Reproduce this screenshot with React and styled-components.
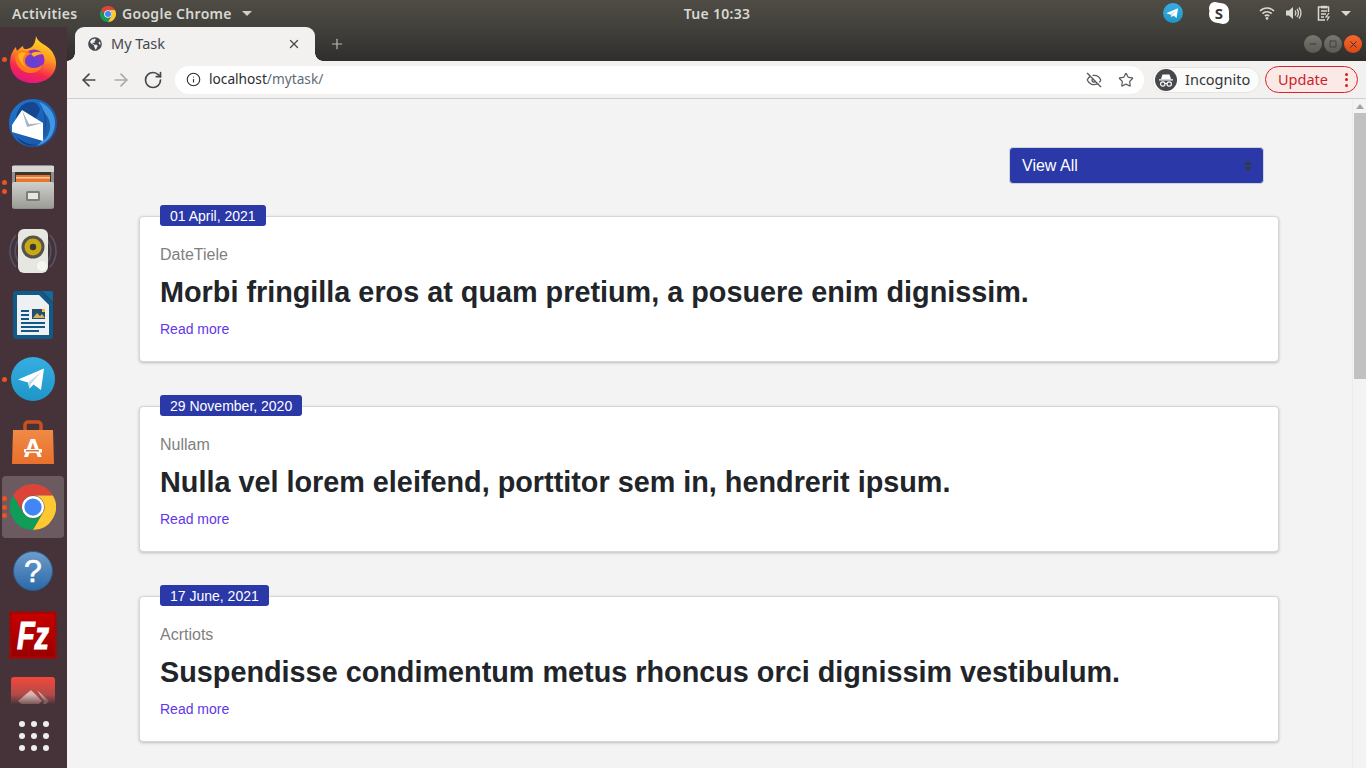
import React from "react";
import styled, { createGlobalStyle } from "styled-components";
import { ArrowLeft, ArrowRight, RotateCw, Info, EyeOff, Star, X, Plus, Minus, Square } from "lucide-react";
import { FaGlobeAmericas } from "react-icons/fa";

const Global = createGlobalStyle`
  html, body { margin: 0; padding: 0; height: 100%; overflow: hidden; background: #f3f3f3; }
  #root { height: 100%; }
  * { box-sizing: border-box; }
`;

const Desktop = styled.div`
  width: 1366px; height: 768px; display: flex; flex-direction: column; overflow: hidden;
  font-family: "Liberation Sans", Arial, sans-serif;
`;
const TopBar = styled.header`
  height: 27px; flex: none; display: grid; grid-template-columns: 1fr auto 1fr; align-items: center;
  background: linear-gradient(#4f4c45, #43413c); color: #d8d8d2;
  font-family: "Noto Sans", sans-serif; font-size: 14px; font-weight: 600; letter-spacing: .3px; line-height: 1;
`;
const TopLeft = styled.div`display: flex; align-items: center; padding-left: 12px;`;
const ActivitiesLabel = styled.span`width: 88px; white-space: nowrap;`;
const AppMenu = styled.div`display: flex; align-items: center; gap: 6px; white-space: nowrap;`;
const Caret = styled.i`
  display: block; width: 0; height: 0; margin-left: 4px;
  border-left: 5px solid transparent; border-right: 5px solid transparent; border-top: 5px solid ${p => p.$c || "#d0d0ca"};
`;
const Clock = styled.div`padding-left: 68px; white-space: nowrap;`;
const Tray = styled.div`display: flex; align-items: center; justify-content: flex-end; padding: 0 15px 1px 0; gap: 0;`;
const TraySlot = styled.span`display: flex; align-items: center; margin-left: ${p => p.$ml || 0}px;`;

const Body = styled.div`flex: 1; min-height: 0; display: flex;`;
const Dock = styled.nav`
  width: 67px; flex: none; display: flex; flex-direction: column; background: #46333a;
`;
const DockList = styled.div`
  flex: 1; min-height: 0; overflow: hidden; display: flex; flex-direction: column;
`;
const DockItem = styled.div`
  position: relative; flex: none; height: 64px; display: flex; align-items: center; justify-content: center;
  padding-right: 1px;
  &::before {
    content: ""; display: ${p => (p.$active ? "block" : "none")};
    position: absolute; left: 2px; right: 3px; top: 1px; bottom: 1px;
    background: rgba(255,255,255,.2); border-radius: 4px;
  }
  & > svg { position: relative; }
`;
const Pips = styled.div`
  position: absolute; left: 2px; top: 0; bottom: 0; display: flex; flex-direction: column;
  justify-content: center; gap: ${p => p.$gap}px; z-index: 1;
`;
const Pip = styled.i`display: block; width: 5px; height: 5px; border-radius: 50%; background: #e95420;`;
const DockFooter = styled.div`
  flex: none; height: 64px; display: grid; grid-template-columns: repeat(3, 6px); gap: 6px;
  place-content: center; background: #46333a;
`;
const GridDot = styled.i`display: block; width: 6px; height: 6px; border-radius: 50%; background: #eee;`;

const Browser = styled.div`flex: 1; min-width: 0; display: flex; flex-direction: column;`;
const TabStrip = styled.div`
  height: 34px; flex: none; display: flex; align-items: stretch; padding-left: 8px;
  background: linear-gradient(#43413c, #2f2e2c);
`;
const Tab = styled.div`
  position: relative; width: 240px; display: flex; align-items: center; padding: 0 14px 0 13px;
  background: #f2f1f0; border-radius: 9px 9px 0 0; color: #45484c;
  font-family: "Noto Sans", sans-serif; font-size: 14.5px;
  &::before, &::after { content: ""; position: absolute; bottom: 0; width: 8px; height: 8px; }
  &::before { left: -8px; background: radial-gradient(circle at 0 0, transparent 7.5px, #f2f1f0 8px); }
  &::after { right: -8px; background: radial-gradient(circle at 100% 0, transparent 7.5px, #f2f1f0 8px); }
`;
const TabTitle = styled.span`flex: 1; margin-left: 9px; padding-bottom: 2px; white-space: nowrap;`;
const NewTab = styled.div`display: flex; align-items: center; margin-left: 14px; color: #b8b7b4;`;
const WindowControls = styled.div`display: flex; align-items: center; gap: 2px; margin-left: auto; padding-right: 4px;`;
const WinBtn = styled.div`
  width: 18px; height: 18px; border-radius: 50%; display: flex; align-items: center; justify-content: center;
  background: ${p => (p.$close ? "linear-gradient(#f4682c,#dd4814)" : "linear-gradient(#79786f,#5b5a54)")};
  color: #2f2e2b;
`;
const Toolbar = styled.div`
  height: 38px; flex: none; display: flex; align-items: center; padding: 0 8px 0 12px;
  background: #f2f1f0; border-bottom: 1px solid #cfcfcf; color: #45484c;
`;
const NavButtons = styled.div`display: flex; align-items: center; gap: 12px; margin-right: 12px;`;
const Omnibox = styled.div`
  width: 969px; height: 28px; display: flex; align-items: center; padding: 0 10px 0 11px;
  background: #fff; border-radius: 14px; font-family: "Noto Sans", sans-serif; font-size: 13.7px; color: #2b2e33;
`;
const Url = styled.span`margin-left: 8px; flex: 1; padding-bottom: 2px; white-space: nowrap; span { color: #5f6b78; }`;
const OmniIcons = styled.div`display: flex; align-items: center; gap: 16px;`;
const IncognitoChip = styled.div`
  width: 108px; height: 26px; margin-left: 8px; display: flex; align-items: center; gap: 8px; padding-left: 2px;
  border: 1px solid #e6e5e3; border-radius: 13px; background: #fbfbfa;
  font-family: "Noto Sans", sans-serif; font-size: 14.5px; color: #33363a;
`;
const ChipText = styled.span`padding-bottom: 2px;`;
const UpdateChip = styled.div`
  width: 93px; height: 27px; margin-left: 5px; display: flex; align-items: center; justify-content: space-between;
  padding: 0 9px 0 12px; border: 1px solid #d8232a; border-radius: 14px; background: #fbe9e8;
  font-family: "Noto Sans", sans-serif; font-size: 14.5px; color: #cc1f1f;
`;
const KebabCol = styled.span`display: flex; flex-direction: column; gap: 2.5px;`;
const KebabDot = styled.i`display: block; width: 3px; height: 3px; border-radius: 50%; background: #cc1f1f;`;

const Viewport = styled.div`flex: 1; min-height: 0; display: flex; background: #f3f3f3;`;
const Page = styled.main`flex: 1; min-width: 0; overflow: hidden; padding: 48px 73px 0 72px;`;
const FilterRow = styled.div`display: flex; justify-content: flex-end; padding-right: 15px; margin-bottom: 32px;`;
const FilterSelect = styled.div`
  width: 255px; height: 37px; display: flex; align-items: center; justify-content: space-between;
  padding: 0 11px 0 12px; background: #2b38a8; border: 1px solid #ced4da; border-radius: 4px;
  color: #fff; font-size: 16px;
`;
const Stack = styled.div`display: flex; flex-direction: column; gap: 44px;`;
const Card = styled.article`
  position: relative; height: 146px; padding: 26px 19px 0 20px; background: #fff;
  border: 1px solid #d6d6d6; border-radius: 4px; box-shadow: 0 1px 3px rgba(0,0,0,.22);
`;
const DateBadge = styled.span`
  position: absolute; left: 20px; top: -12px; height: 21px; padding: 0 10px; display: flex; align-items: center;
  background: #2b38a8; border-radius: 3px; color: #fff; font-size: 14px; white-space: nowrap;
`;
const Category = styled.div`font-size: 16px; line-height: 24px; color: #7f7f7f;`;
const Title = styled.h3`
  margin: 8px 0 9px; font-size: 28.8px; line-height: 34.5px; font-weight: 700; color: #212529;
`;
const ReadMore = styled.a`display: block; font-size: 14px; line-height: 21px; color: #5f37e8;`;
const Scrollbar = styled.div`width: 14px; flex: none; display: flex; flex-direction: column; align-items: center; background: #f3f3f3; border-left: 1px solid #ececec;`;
const ScrollUp = styled.i`
  display: block; width: 0; height: 0; margin: 5px 0 4px;
  border-left: 4px solid transparent; border-right: 4px solid transparent; border-bottom: 5px solid #a3a3a3;
`;
const ScrollThumb = styled.div`width: 12px; height: 266px; background: #c1c1c1;`;

/* ---------- drawings ---------- */
const TelegramGlyph = ({ size, id }) => (
  <svg width={size} height={size} viewBox="0 0 44 44">
    <defs>
      <linearGradient id={id} x1="0" y1="0" x2="0" y2="1">
        <stop offset="0" stopColor="#37aee2" /><stop offset="1" stopColor="#1e96c8" />
      </linearGradient>
    </defs>
    <circle cx="22" cy="22" r="22" fill={`url(#${id})`} />
    <path d="M7 22.5 33 11.5 30 33 22.5 27.5 18.5 31.5 17 25.5Z" fill="#fff" />
    <path d="M17 25.5 30 15 20 27 18.5 31.5Z" fill="#c8daea" />
  </svg>
);
const Firefox = () => (
  <svg width="46" height="47" viewBox="0 0 46 47">
    <defs>
      <linearGradient id="ff1" x1=".7" y1="0" x2=".35" y2="1">
        <stop offset="0" stopColor="#ffe226" /><stop offset=".4" stopColor="#ff9a1f" /><stop offset=".75" stopColor="#f5274f" /><stop offset="1" stopColor="#e31587" />
      </linearGradient>
      <radialGradient id="ff2" cx=".45" cy=".6"><stop offset="0" stopColor="#5147d6" /><stop offset="1" stopColor="#9330c4" /></radialGradient>
    </defs>
    <path d="M26 0c1 4 4 6 7 8 5 3 9 6 11 11 2 4 2 7 2 9 0 11-10 19-23 19C10 47 0 39 0 26 0 22 1 18 3 15c1-2 2-3 3-4 0 2 1 3 1 4 2-2 4-4 6-5 0 2 1 3 2 3 5 0 10-2 11-13z" fill="url(#ff1)" />
    <circle cx="24" cy="24" r="10.500" fill="url(#ff2)" />
    <path d="M5 20c2-3 6-6 10-5 3 0 5 2 6 3-3 1-6 3-6 7 0 4 4 7 8 7 5 0 8-2 10-4-2 6-7 9-12 9-9 0-16-7-16-17z" fill="#ff7a1c" />
    <path d="M8 18c3-2 6-2 9-1-2 1-4 3-4 7 0 3 1 5 3 7-5-3-8-8-8-13z" fill="#ffb11f" />
    <path d="M21 18c3-3 9-3 13 0-3 0-8 1-10 3z" fill="#ffb11f" />
  </svg>
);
const Thunderbird = () => (
  <svg width="48" height="48" viewBox="0 0 48 48">
    <defs>
      <linearGradient id="tb1" x1="0" y1="0" x2="1" y2="1"><stop offset="0" stopColor="#1e78d2" /><stop offset="1" stopColor="#1a4fa0" /></linearGradient>
    </defs>
    <circle cx="24" cy="24" r="24" fill="url(#tb1)" />
    <path d="M30 3c9 3 16 11 16 21 0 9-5 17-13 21l-5 2c6-5 9-11 9-18 1-9-1-18-7-26z" fill="#3f97e4" />
    <path d="M34 12c5 5 8 11 7 18-1 5-3 9-7 12 2-5 3-10 2-15 0-5-1-10-2-15z" fill="#16468f" opacity=".7" />
    <path d="M7 19C8 9 15 2 24 3c4 1 6 4 7 8l-5 10-8-6-5 8-6 1z" fill="#16468f" />
    <circle cx="14" cy="14" r="1.600" fill="#0a1c3a" />
    <path d="M3 26 13 11 34 24V42L3 33z" fill="#fff" />
    <path d="M13 11 18 28 34 24 20 25z" fill="#aab4c2" />
    <path d="M8 38c5 5 12 8 20 8-8 2-16-1-20-8z" fill="#0f3a80" />
  </svg>
);
const Files = () => (
  <svg width="42" height="44" viewBox="0 0 42 44">
    <defs>
      <linearGradient id="fi1" x1="0" y1="0" x2="0" y2="1"><stop offset="0" stopColor="#cfcfcb" /><stop offset="1" stopColor="#9d9d98" /></linearGradient>
    </defs>
    <rect x="0" y="0" width="42" height="44" rx="2.500" fill="#8e8e8a" />
    <rect x="0" y="1" width="42" height="6" fill="#d6d6d2" />
    <rect x="3" y="7" width="36" height="12" fill="#3a3733" />
    <rect x="4" y="10" width="34" height="9" fill="#e8762f" />
    <rect x="4" y="12" width="34" height="1.500" fill="#f7c9a0" />
    <rect x="0" y="17" width="42" height="26" rx="2" fill="url(#fi1)" />
    <rect x="14" y="26" width="14" height="10" rx="1.500" fill="#7c7c78" />
    <rect x="16" y="28" width="10" height="6" fill="#e6e6e2" />
  </svg>
);
const Speaker = () => (
  <svg width="48" height="48" viewBox="0 0 48 48">
    <path d="M7 8c-8 9-8 23 0 32M41 8c8 9 8 23 0 32M10 12c-5 7-5 17 0 24M38 12c5 7 5 17 0 24" stroke="#5e6f8c" strokeWidth="1.600" fill="none" opacity=".55" />
    <rect x="9" y="2" width="30" height="44" rx="6" fill="#e6e7e1" />
    <circle cx="24" cy="20" r="11.500" fill="#55534b" />
    <circle cx="24" cy="20" r="8.500" fill="#c7a916" />
    <circle cx="24" cy="20" r="3.200" fill="#3a382f" />
    <circle cx="33" cy="39" r="5" fill="#f6f6f3" />
  </svg>
);
const Writer = () => (
  <svg width="40" height="48" viewBox="0 0 40 48">
    <path d="M2 0h26l12 12v33a3 3 0 0 1-3 3H3a3 3 0 0 1-3-3V2a2 2 0 0 1 2-2z" fill="#0f5a88" />
    <path d="M29 0h9a2 2 0 0 1 2 2v9z" fill="#0f6aa0" />
    <path d="M4 4h22l10 10v30H4z" fill="#eef0f1" />
    <path d="M8 19h8v2H8zM8 23h8v2H8zM8 27h8v2H8zM8 31h24v2H8zM8 35h24v2H8zM8 39h18v2H8z" fill="#0f5a88" />
    <rect x="19" y="18" width="13" height="10" fill="#24506e" />
    <path d="M20 27l4-5 3 3 2-2 3 4z" fill="#d9b25f" />
    <rect x="29" y="18" width="3" height="3" fill="#f4c430" />
  </svg>
);
const Software = () => (
  <svg width="42" height="46" viewBox="0 0 42 46">
    <defs>
      <linearGradient id="sw1" x1="0" y1="0" x2="0" y2="1"><stop offset="0" stopColor="#f08a45" /><stop offset="1" stopColor="#e8702c" /></linearGradient>
    </defs>
    <path d="M13 13V5a3 3 0 0 1 3-3h10a3 3 0 0 1 3 3v8" stroke="#c9511c" strokeWidth="3.500" fill="none" />
    <path d="M1 10h40l1 34H0z" fill="url(#sw1)" />
    <text x="21" y="37" textAnchor="middle" fontFamily="Liberation Sans" fontWeight="700" fontSize="26" fill="#fff">A</text>
    <rect x="12" y="29" width="18" height="3.500" fill="#fff" /><rect x="14" y="30" width="13" height="1.500" fill="#e8702c" />
  </svg>
);
const Chrome = ({ size = 46 }) => (
  <svg width={size} height={size} viewBox="0 0 48 48">
    <path d="M3.200 12A24 24 0 0 1 44.800 12H24A12 12 0 0 0 13.600 30Z" fill="#db4437" />
    <path d="M3.200 12 13.600 30A12 12 0 0 0 34.400 30L24 48A24 24 0 0 1 3.200 12Z" fill="#0f9d58" />
    <path d="M44.800 12A24 24 0 0 1 24 48L34.400 30A12 12 0 0 0 24 12Z" fill="#fdc830" />
    <circle cx="24" cy="24" r="11.500" fill="#fff" />
    <circle cx="24" cy="24" r="9" fill="#4285f4" />
  </svg>
);
const Help = () => (
  <svg width="40" height="40" viewBox="0 0 40 40">
    <defs>
      <linearGradient id="he1" x1="0" y1="0" x2="0" y2="1"><stop offset="0" stopColor="#6f9ccb" /><stop offset="1" stopColor="#2a69a8" /></linearGradient>
    </defs>
    <circle cx="20" cy="20" r="19.500" fill="url(#he1)" stroke="#2b5c90" />
    <text x="20" y="31" textAnchor="middle" fontFamily="Liberation Sans" fontWeight="400" fontSize="32" stroke="#fff" strokeWidth=".6" fill="#fff">?</text>
  </svg>
);
const FileZilla = () => (
  <svg width="48" height="48" viewBox="0 0 48 48">
    <defs>
      <linearGradient id="fz1" x1="0" y1="0" x2="0" y2="1"><stop offset="0" stopColor="#c80000" /><stop offset="1" stopColor="#9a0000" /></linearGradient>
    </defs>
    <rect x="2.500" y="2.500" width="43" height="43" fill="url(#fz1)" stroke="#b00000" strokeWidth="5" strokeLinecap="round" strokeDasharray="0 5.375" />
    <rect x="3" y="3" width="42" height="42" fill="url(#fz1)" />
    <text transform="translate(24 38) scale(1 1.35)" textAnchor="middle" fontFamily="Liberation Sans" fontWeight="700" fontStyle="italic" fontSize="29" fill="#fff" stroke="#fff" strokeWidth=".8">Fz</text>
  </svg>
);
const RedApp = () => (
  <svg width="44" height="44" viewBox="0 0 44 44">
    <defs>
      <linearGradient id="ra1" x1="0" y1="0" x2="0" y2="1"><stop offset="0" stopColor="#f4473a" /><stop offset=".4" stopColor="#b24a48" /><stop offset=".62" stopColor="#46333a" /></linearGradient>
      <linearGradient id="ra2" x1="0" y1="0" x2="0" y2="1"><stop offset=".2" stopColor="#d9b6b2" /><stop offset=".62" stopColor="#7f5a5c" /></linearGradient>
    </defs>
    <rect x="0" y="0" width="44" height="44" rx="3" fill="url(#ra1)" />
    <path d="M7 24 20 13 31 24 20 35z" fill="url(#ra2)" />
    <path d="M26 13 38 24 31 31 33 24z" fill="url(#ra2)" />
  </svg>
);
const Wifi = () => (
  <svg width="16" height="14" viewBox="0 0 16 14" fill="none" stroke="#d8d8d2" strokeWidth="1.600">
    <path d="M1 5c4-4 10-4 14 0" /><path d="M3.400 7.600c2.600-2.400 6.600-2.400 9.200 0" /><path d="M5.800 10c1.400-1.100 3-1.100 4.400 0" />
    <circle cx="8" cy="12.400" r="1.300" fill="#d8d8d2" stroke="none" />
  </svg>
);
const Volume = () => (
  <svg width="16" height="14" viewBox="0 0 16 14" fill="none" stroke="#d8d8d2" strokeWidth="1.300">
    <path d="M0 4.500h3L7 1v12L3 9.500H0z" fill="#d8d8d2" stroke="none" />
    <path d="M9 4.500c1 1.500 1 3.500 0 5M11 3c1.800 2.500 1.800 5.500 0 8M13 1.500c2.500 3.500 2.500 7.500 0 11" />
  </svg>
);
const BatteryClip = () => (
  <svg width="14" height="16" viewBox="0 0 14 16" fill="none" stroke="#d8d8d2" strokeWidth="1.500">
    <path d="M4 2H1.500v13H8M10 2h1.500v5" /><rect x="4" y=".8" width="6" height="2.600" fill="#d8d8d2" stroke="none" />
    <path d="M4 6h6M4 9h5M4 12h3" /><path d="M12 8l-3 4h3l-2 3.500" strokeWidth="1.200" />
  </svg>
);
const SkypeLogo = () => (
  <svg width="22" height="24" viewBox="0 0 22 24">
    <path d="M7 1c2 0 3 1 5 1 6 0 9 4 9 9 0 2 0 3 0 5 1 4-2 7-6 7-2 0-3-1-5-1-5 0-9-4-9-9 0-2 1-3 0-5C1 4 3 1 7 1z" fill="#fff" />
    <text x="11" y="17.500" textAnchor="middle" fontFamily="Noto Sans" fontWeight="700" fontSize="15" fill="#3a3935">S</text>
  </svg>
);
const IncognitoIcon = () => (
  <svg width="22" height="22" viewBox="0 0 22 22">
    <circle cx="11" cy="11" r="11" fill="#46484c" />
    <path d="M6 10l1.500-4.500h7L16 10zM4 10.200h14v1.200H4z" fill="#fff" />
    <g fill="none" stroke="#fff" strokeWidth="1.200">
      <circle cx="7.800" cy="15" r="2.200" /><circle cx="14.200" cy="15" r="2.200" /><path d="M10 14.500h2" />
    </g>
  </svg>
);
const SortArrows = () => (
  <svg width="8" height="10" viewBox="0 0 8 10"><path d="M4 0 8 4H0zM4 10 0 6h8z" fill="#343a40" /></svg>
);

const docks = [
  { icon: <Firefox />, pips: 1 },
  { icon: <Thunderbird /> },
  { icon: <Files />, pips: 2 },
  { icon: <Speaker /> },
  { icon: <Writer /> },
  { icon: <TelegramGlyph size={44} id="tgd" />, pips: 1 },
  { icon: <Software /> },
  { icon: <Chrome />, pips: 3, active: true },
  { icon: <Help /> },
  { icon: <FileZilla /> },
  { icon: <RedApp /> },
];

const posts = [
  { date: "01 April, 2021", cat: "DateTiele", title: "Morbi fringilla eros at quam pretium, a posuere enim dignissim." },
  { date: "29 November, 2020", cat: "Nullam", title: "Nulla vel lorem eleifend, porttitor sem in, hendrerit ipsum." },
  { date: "17 June, 2021", cat: "Acrtiots", title: "Suspendisse condimentum metus rhoncus orci dignissim vestibulum." },
];

export default function App() {
  return (
    <Desktop>
      <Global />
      <TopBar>
        <TopLeft>
          <ActivitiesLabel>Activities</ActivitiesLabel>
          <AppMenu><Chrome size={16} />Google Chrome<Caret /></AppMenu>
        </TopLeft>
        <Clock>Tue 10:33</Clock>
        <Tray>
          <TraySlot><TelegramGlyph size={20} id="tgt" /></TraySlot>
          <TraySlot $ml={25}><SkypeLogo /></TraySlot>
          <TraySlot $ml={29}><Wifi /></TraySlot>
          <TraySlot $ml={11}><Volume /></TraySlot>
          <TraySlot $ml={15}><BatteryClip /></TraySlot>
          <TraySlot $ml={6}><Caret $c="#d8d8d2" /></TraySlot>
        </Tray>
      </TopBar>
      <Body>
        <Dock>
          <DockList>
            {docks.map((d, i) => (
              <DockItem key={i} $active={d.active}>
                {d.pips ? (
                  <Pips $gap={d.pips === 2 ? 4 : 3.5}>
                    {Array.from({ length: d.pips }).map((_, k) => <Pip key={k} />)}
                  </Pips>
                ) : null}
                {d.icon}
              </DockItem>
            ))}
          </DockList>
          <DockFooter>
            {Array.from({ length: 9 }).map((_, i) => <GridDot key={i} />)}
          </DockFooter>
        </Dock>
        <Browser>
          <TabStrip>
            <Tab>
              <FaGlobeAmericas size={14} color="#45484c" />
              <TabTitle>My Task</TabTitle>
              <X size={14} strokeWidth={2.2} />
            </Tab>
            <NewTab><Plus size={16} strokeWidth={1.8} /></NewTab>
            <WindowControls>
              <WinBtn><Minus size={10} strokeWidth={2} /></WinBtn>
              <WinBtn><Square size={8} strokeWidth={2} /></WinBtn>
              <WinBtn $close><X size={11} strokeWidth={2} /></WinBtn>
            </WindowControls>
          </TabStrip>
          <Toolbar>
            <NavButtons>
              <ArrowLeft size={20} strokeWidth={2} />
              <ArrowRight size={20} strokeWidth={2} color="#a9a9a7" />
              <RotateCw size={20} strokeWidth={2} />
            </NavButtons>
            <Omnibox>
              <Info size={15} strokeWidth={1.8} />
              <Url>localhost<span>/mytask/</span></Url>
              <OmniIcons>
                <EyeOff size={16} strokeWidth={2} color="#5a5c60" />
                <Star size={16} strokeWidth={1.8} color="#5a5c60" />
              </OmniIcons>
            </Omnibox>
            <IncognitoChip><IncognitoIcon /><ChipText>Incognito</ChipText></IncognitoChip>
            <UpdateChip>
              <ChipText>Update</ChipText>
              <KebabCol><KebabDot /><KebabDot /><KebabDot /></KebabCol>
            </UpdateChip>
          </Toolbar>
          <Viewport>
            <Page>
              <FilterRow>
                <FilterSelect>View All<SortArrows /></FilterSelect>
              </FilterRow>
              <Stack>
                {posts.map(p => (
                  <Card key={p.date}>
                    <DateBadge>{p.date}</DateBadge>
                    <Category>{p.cat}</Category>
                    <Title>{p.title}</Title>
                    <ReadMore>Read more</ReadMore>
                  </Card>
                ))}
              </Stack>
            </Page>
            <Scrollbar><ScrollUp /><ScrollThumb /></Scrollbar>
          </Viewport>
        </Browser>
      </Body>
    </Desktop>
  );
}
